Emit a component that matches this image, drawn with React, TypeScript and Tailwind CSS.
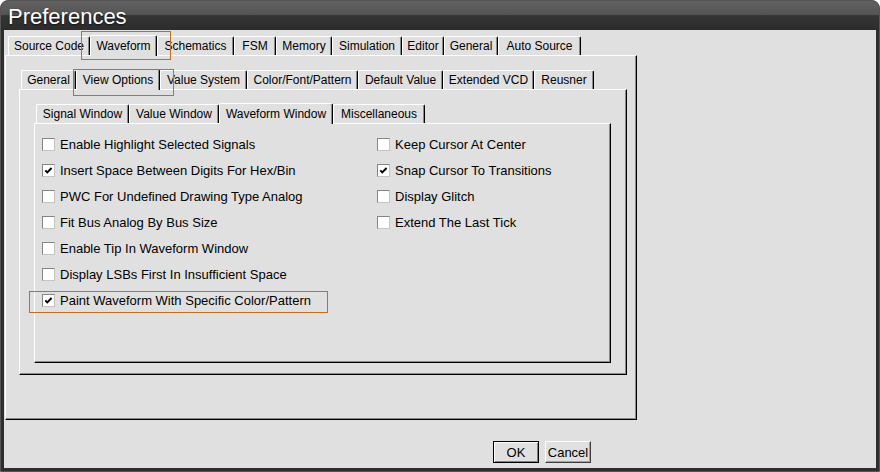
import React from "react";

type TabDef = { label: string; w: string; selected?: boolean };

const row1: TabDef[] = [
  { label: "Source Code", w: "w-[82px]" },
  { label: "Waveform", w: "w-[67px]", selected: true },
  { label: "Schematics", w: "w-[77px]" },
  { label: "FSM", w: "w-[42px]" },
  { label: "Memory", w: "w-[56px]" },
  { label: "Simulation", w: "w-[70px]" },
  { label: "Editor", w: "w-[42px]" },
  { label: "General", w: "w-[54px]" },
  { label: "Auto Source", w: "w-[83px]" },
];

const row2: TabDef[] = [
  { label: "General", w: "w-[55px]" },
  { label: "View Options", w: "w-[84px]", selected: true },
  { label: "Value System", w: "w-[87px]" },
  { label: "Color/Font/Pattern", w: "w-[111px]" },
  { label: "Default Value", w: "w-[85px]" },
  { label: "Extended VCD", w: "w-[91px]" },
  { label: "Reusner", w: "w-[60px]" },
];

const row3: TabDef[] = [
  { label: "Signal Window", w: "w-[93px]" },
  { label: "Value Window", w: "w-[90px]" },
  { label: "Waveform Window", w: "w-[114px]", selected: true },
  { label: "Miscellaneous", w: "w-[92px]" },
];

function TabRow({ tabs, cls }: { tabs: TabDef[]; cls: string }) {
  return (
    <div className={`flex items-end h-[20px] ${cls}`}>
      {tabs.map((t) => (
        <div
          key={t.label}
          className={`${t.w} ${
            t.selected ? "h-[21px] relative z-10 -mb-[1px] pb-[1px]" : "h-[19px]"
          } shrink-0 flex items-center justify-center bg-[#e0e0e0] border-l border-t border-r border-l-white border-t-white border-r-black shadow-[inset_-1px_0_0_#8a8a8a] rounded-t-[2px] text-[12px] text-black leading-none whitespace-nowrap`}
        >
          {t.label}
        </div>
      ))}
    </div>
  );
}

function Check({ label, checked }: { label: string; checked?: boolean }) {
  return (
    <div className="h-[26px] flex items-center">
      <div className="w-[13px] h-[13px] shrink-0 bg-white border border-t-[#858585] border-l-[#858585] border-r-[#c4c4c4] border-b-[#c4c4c4] flex items-center justify-center">
        {checked && (
          <svg width="11" height="11" viewBox="0 0 11 11">
            <path d="M2.3 5.3 L4.3 7.4 L8.6 3" fill="none" stroke="#000" strokeWidth="1.9" />
          </svg>
        )}
      </div>
      <span className="ml-[5px] text-[13px] text-black leading-none whitespace-nowrap">{label}</span>
    </div>
  );
}

export default function App() {
  return (
    <div className="relative w-[880px] h-[472px] flex flex-col bg-[#2e2e2e] border border-[#555] rounded-t-[8px] overflow-hidden font-['Liberation_Sans',Arial,sans-serif]">
      {/* title bar */}
      <div className="h-[30px] shrink-0 -mx-[1px] -mt-[1px] pl-[8px] flex items-center bg-[linear-gradient(to_bottom,#626262,#555555_48%,#353535_52%,#2c2c2c)] rounded-t-[8px]">
        <span className="text-white text-[22px] leading-none mt-[3px] [text-shadow:0_1px_2px_rgba(0,0,0,0.7)]">
          Preferences
        </span>
      </div>

      {/* body */}
      <div className="flex-1 mx-[3px] mb-[3px] bg-[#e0e0e0] pt-[5px] pl-[1px] flex flex-col">
        <TabRow tabs={row1} cls="ml-[3px]" />
        <div className="w-[632px] h-[365px] border border-l-white border-t-white border-r-black border-b-black shadow-[inset_-1px_-1px_0_#8a8a8a] pt-[13px] pl-[13px]">
          <TabRow tabs={row2} cls="ml-[2px]" />
          <div className="w-[608px] h-[286px] border border-l-white border-t-white border-r-black border-b-black shadow-[inset_-1px_-1px_0_#8a8a8a] pt-[13px] pl-[14px]">
            <TabRow tabs={row3} cls="ml-[2px]" />
            <div className="w-[577px] h-[240px] border border-l-white border-t-white border-r-black border-b-black shadow-[inset_-1px_-1px_0_#8a8a8a] pt-[7px] pl-[7px] flex">
              <div className="w-[335px] flex flex-col">
                <Check label="Enable Highlight Selected Signals" />
                <Check label="Insert Space Between Digits For Hex/Bin" checked />
                <Check label="PWC For Undefined Drawing Type Analog" />
                <Check label="Fit Bus Analog By Bus Size" />
                <Check label="Enable Tip In Waveform Window" />
                <Check label="Display LSBs First In Insufficient Space" />
                <Check label="Paint Waveform With Specific Color/Pattern" checked />
              </div>
              <div className="flex flex-col">
                <Check label="Keep Cursor At Center" />
                <Check label="Snap Cursor To Transitions" checked />
                <Check label="Display Glitch" />
                <Check label="Extend The Last Tick" />
              </div>
            </div>
          </div>
        </div>

        {/* buttons */}
        <div className="mt-[21px] ml-[488px] flex gap-[6px]">
          <button className="w-[46px] h-[22px] border border-black bg-[#e0e0e0] shadow-[inset_1px_1px_0_#ffffff,inset_-1px_-1px_0_#808080] text-[13px] text-black leading-none">
            OK
          </button>
          <button className="w-[46px] h-[22px] border border-t-white border-l-white border-r-[#404040] border-b-[#404040] bg-[#e0e0e0] shadow-[inset_-1px_-1px_0_#a0a0a0] text-[13px] text-black leading-none">
            Cancel
          </button>
        </div>
      </div>

      {/* annotation boxes */}
      <div className="absolute z-20 left-[80px] top-[30px] w-[90px] h-[29px] border border-[#c26d1f] pointer-events-none" />
      <div className="absolute z-20 left-[72px] top-[68px] w-[101px] h-[27px] border border-[#c26d1f] pointer-events-none" />
      <div className="absolute z-20 left-[28px] top-[290px] w-[299px] h-[22px] border border-[#c26d1f] pointer-events-none" />
    </div>
  );
}
